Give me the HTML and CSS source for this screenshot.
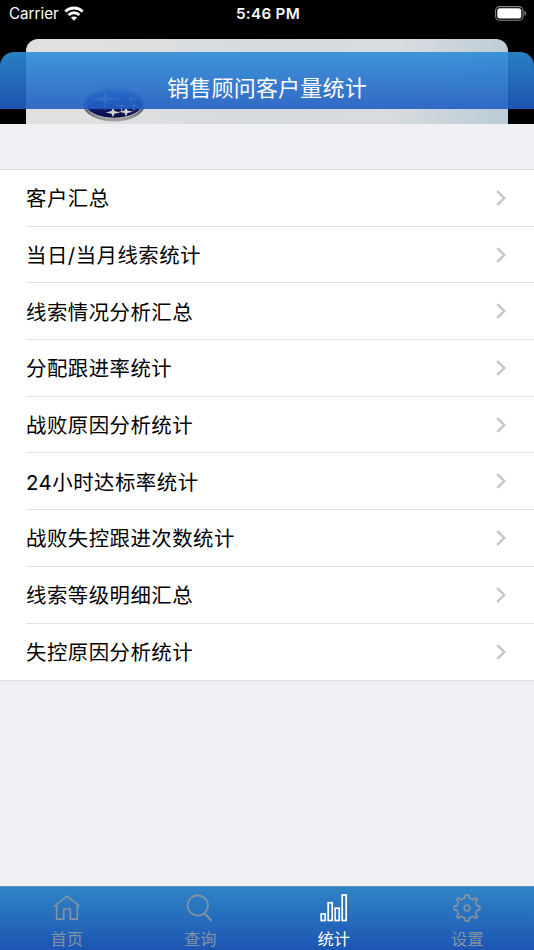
FILE: index.html
```
<!DOCTYPE html>
<html lang="zh-CN">
<head>
    <meta charset="UTF-8">
    <meta name="viewport" content="width=device-width, initial-scale=1.0">
    <title>销售顾问客户量统计</title>
    <link rel="stylesheet" href="styles.css">
</head>
<body>

    <header class="top">
        <div class="status-bar">
            <div class="carrier">
                <span>Carrier</span>
                <svg width="20" height="15" viewBox="0 0 20 15" fill="none" stroke="#fff" stroke-width="2.8">
                    <path d="M1.300 5.500 C6.200 .8 13.800 .8 18.700 5.500"/>
                    <path d="M4.500 9 C7.700 6 12.300 6 15.500 9"/>
                    <path d="M10 14.700 L6.900 11.600 C8.600 10 11.400 10 13.100 11.600 Z" fill="#fff" stroke="none"/>
                </svg>
            </div>
            <div class="time">5:46 PM</div>
            <div class="battery">
                <svg width="32" height="15" viewBox="0 0 32 15">
                    <rect x=".6" y=".6" width="27.4" height="13.6" rx="4" fill="none" stroke="#868686" stroke-width="1.1"/>
                    <rect x="2.3" y="2.3" width="24" height="10.2" rx="2.5" fill="#fff"/>
                    <path d="M29.4 5 Q31.2 5.5 31.2 7.4 T29.4 9.8 Z" fill="#868686"/>
                </svg>
            </div>
        </div>

        <!-- tarjeta de la pantalla anterior, detrás de la barra -->
        <div class="back-card">
            <svg class="brand" width="64" height="36" viewBox="0 0 64 36">
                <defs>
                    <linearGradient id="rim" x1="0" y1="0" x2="0" y2="1">
                        <stop offset="0" stop-color="#8b8d92"/>
                        <stop offset=".7" stop-color="#66686d"/>
                        <stop offset="1" stop-color="#a8a8a8"/>
                    </linearGradient>
                    <linearGradient id="oval" x1="0" y1="0" x2="0" y2="1">
                        <stop offset="0" stop-color="#3f68b8"/>
                        <stop offset=".5" stop-color="#14207c"/>
                        <stop offset="1" stop-color="#090d3c"/>
                    </linearGradient>
                </defs>
                <ellipse cx="32" cy="17.7" rx="31" ry="16.700" fill="url(#rim)"/>
                <ellipse cx="32" cy="17" rx="28.6" ry="14.2" fill="url(#oval)" stroke="#c8c8c8" stroke-width=".9"/>
                <g fill="#d0d0d0">
                    <path d="M23 3 L24.3 10.4 L38 12 L24.3 13.4 L23 23.5 L21.7 13.4 L8 12 L21.7 10.4 Z"/>
                    <path d="M49 8 l.9 3.4 5 .8 -5 .8 -.9 3.4 -.9 -3.4 -5 -.8 5 -.8 Z"/>
                    <path d="M39.5 15 l1.1 3.2 4.5 .8 -4.5 .8 -1.1 5 -1.1 -5 -4.5 -.8 4.5 -.8 Z"/>
                    <path d="M52 15 l1.1 3 4 .8 -4 .8 -1.1 5 -1.1 -5 -4 -.8 4 -.8 Z"/>
                    <path d="M31 20.500 l1.500 3.600 5.800 1.300 -5.800 1.300 -1.500 3.600 -1.500 -3.600 -5.800 -1.300 5.800 -1.300 Z"/>
                    <path d="M44 20 l1.500 3.500 5.600 1.300 -5.600 1.300 -1.500 3.500 -1.500 -3.500 -5.600 -1.300 5.600 -1.300 Z"/>
                </g>
            </svg>
        </div>

        <div class="nav-bar">
            <h1>销售顾问客户量统计</h1>
        </div>
    </header>

    <main>
        <ul class="menu">
            <li><span>客户汇总</span><svg class="arrow" viewBox="0 0 10 16"><path d="M1.200 1.200 L8.300 8 L1.200 14.800"/></svg></li>
            <li><span>当日/当月线索统计</span><svg class="arrow" viewBox="0 0 10 16"><path d="M1.200 1.200 L8.300 8 L1.200 14.800"/></svg></li>
            <li><span>线索情况分析汇总</span><svg class="arrow" viewBox="0 0 10 16"><path d="M1.200 1.200 L8.300 8 L1.200 14.800"/></svg></li>
            <li><span>分配跟进率统计</span><svg class="arrow" viewBox="0 0 10 16"><path d="M1.200 1.200 L8.300 8 L1.200 14.800"/></svg></li>
            <li><span>战败原因分析统计</span><svg class="arrow" viewBox="0 0 10 16"><path d="M1.200 1.200 L8.300 8 L1.200 14.800"/></svg></li>
            <li><span>24小时达标率统计</span><svg class="arrow" viewBox="0 0 10 16"><path d="M1.200 1.200 L8.300 8 L1.200 14.800"/></svg></li>
            <li><span>战败失控跟进次数统计</span><svg class="arrow" viewBox="0 0 10 16"><path d="M1.200 1.200 L8.300 8 L1.200 14.800"/></svg></li>
            <li><span>线索等级明细汇总</span><svg class="arrow" viewBox="0 0 10 16"><path d="M1.200 1.200 L8.300 8 L1.200 14.800"/></svg></li>
            <li><span>失控原因分析统计</span><svg class="arrow" viewBox="0 0 10 16"><path d="M1.200 1.200 L8.300 8 L1.200 14.800"/></svg></li>
        </ul>
    </main>

    <nav class="tab-bar">
        <a class="tab">
            <svg width="30" height="30" viewBox="0 0 30 30">
                <path d="M1.800 13.700 L15 3 L28.200 13.700 M4.700 11.700 V26.200 H11.700 V16 H18.300 V26.200 H25.300 V11.700"/>
            </svg>
            <span>首页</span>
        </a>
        <a class="tab">
            <svg width="30" height="30" viewBox="0 0 30 30">
                <circle cx="12.800" cy="12.500" r="10.200"/>
                <path d="M19.500 20.500 L26.500 27.700" stroke-width="2.200"/>
            </svg>
            <span>查询</span>
        </a>
        <a class="tab active">
            <svg width="30" height="30" viewBox="0 0 30 30">
                <rect x="2.200" y="21" width="4" height="6.500"/>
                <rect x="9.200" y="9.700" width="4" height="17.800"/>
                <rect x="16.200" y="15.200" width="4" height="12.300"/>
                <rect x="23.200" y="2" width="4" height="25.500"/>
            </svg>
            <span>统计</span>
        </a>
        <a class="tab">
            <svg width="30" height="30" viewBox="0 0 30 30">
                <path d="M13.300 2.200 H16.700 L17.500 5.200 Q19.500 5.600 21 6.700 L23.800 4.900 L25.300 6.500 L23.500 9.300 Q24.500 10.800 24.900 12.700 L27.800 13.300 V16.700 L24.900 17.400 Q24.500 19.200 23.500 20.800 L25.300 23.500 L23.800 25.100 L21 23.400 Q19.500 24.400 17.500 24.900 L16.700 27.800 H13.300 L12.500 24.900 Q10.600 24.400 9 23.400 L6.200 25.100 L4.700 23.500 L6.500 20.800 Q5.500 19.200 5.100 17.400 L2.200 16.700 V13.300 L5.100 12.700 Q5.500 10.800 6.500 9.300 L4.700 6.500 L6.200 4.900 L9 6.700 Q10.600 5.600 12.500 5.200 Z"/>
                <circle cx="15" cy="15" r="2.900"/>
            </svg>
            <span>设置</span>
        </a>
    </nav>

</body>
</html>
```
FILE: styles.css
```
* {
    margin: 0;
    padding: 0;
    box-sizing: border-box;
}

body {
    display: flex;
    flex-direction: column;
    height: 100vh;
    overflow: hidden;
    background-color: #efeff4;
    font-family: Inter, "Noto Sans CJK SC", sans-serif;
}

/* Cabecera */
.top {
    position: relative;
    height: 124px;
    background-color: #000;
    overflow: hidden;
}

.status-bar {
    display: grid;
    grid-template-columns: 1fr auto 1fr;
    align-items: center;
    height: 27px;
    padding: 0 7px 0 9px;
    color: #fff;
    font-size: 15.2px;
}

.carrier {
    display: flex;
    align-items: center;
    gap: 5px;
}

.carrier svg {
    margin-bottom: 1px;
}

.time {
    font-weight: 600;
    letter-spacing: 0.3px;
}

.battery {
    display: flex;
    justify-content: flex-end;
}

.back-card {
    height: 85px;
    margin: 12px 26px 0;
    padding: 48px 0 0 56px;
    border-radius: 12px 12px 0 0;
    background: linear-gradient(100deg, #e0e0e0 15%, #d5dade 50%, #d9dcdf 75%, #b9cbd6 100%);
}

.brand {
    display: block;
}

.nav-bar {
    position: absolute;
    top: 52px;
    left: 0;
    right: 0;
    height: 57px;
    padding-top: 15px;
    border-radius: 14px 14px 0 0;
    background: linear-gradient(rgba(46, 141, 215, 0.9), rgba(32, 93, 195, 0.9));
    text-align: center;
}

.nav-bar h1 {
    color: #fff;
    font-size: 22px;
    line-height: 42px;
    font-weight: 400;
    letter-spacing: 0.2px;
}

/* Lista */
main {
    flex: 1;
    padding-top: 45px;
}

.menu {
    list-style: none;
    background-color: #fff;
    border-top: 1px solid #dddde0;
    border-bottom: 1px solid #dddde0;
}

.menu li {
    display: flex;
    align-items: center;
    justify-content: space-between;
    height: 56.7px;
    margin-left: 26px;
    padding-right: 28px;
    border-bottom: 1px solid #e2e2e4;
    color: #000;
    font-size: 20.4px;
    letter-spacing: 0.5px;
}

.menu li span {
    padding-bottom: 1px;
}

.menu li:last-child {
    border-bottom: none;
}

.arrow {
    width: 10px;
    height: 16px;
    fill: none;
    stroke: #c4c4c6;
    stroke-width: 2.4;
}

/* Barra inferior */
.tab-bar {
    display: flex;
    height: 64px;
    border-top: 1px solid #6495bd;
    background: linear-gradient(#2f84c6, #1d55b3);
}

.tab {
    flex: 1;
    display: flex;
    flex-direction: column;
    align-items: center;
    padding-top: 6px;
    color: #8292a3;
    font-size: 16.3px;
    line-height: 32px;
}

.tab svg {
    flex-shrink: 0;
    fill: none;
    stroke: currentColor;
    stroke-width: 1.7;
}

.tab.active {
    color: #fff;
}
```
